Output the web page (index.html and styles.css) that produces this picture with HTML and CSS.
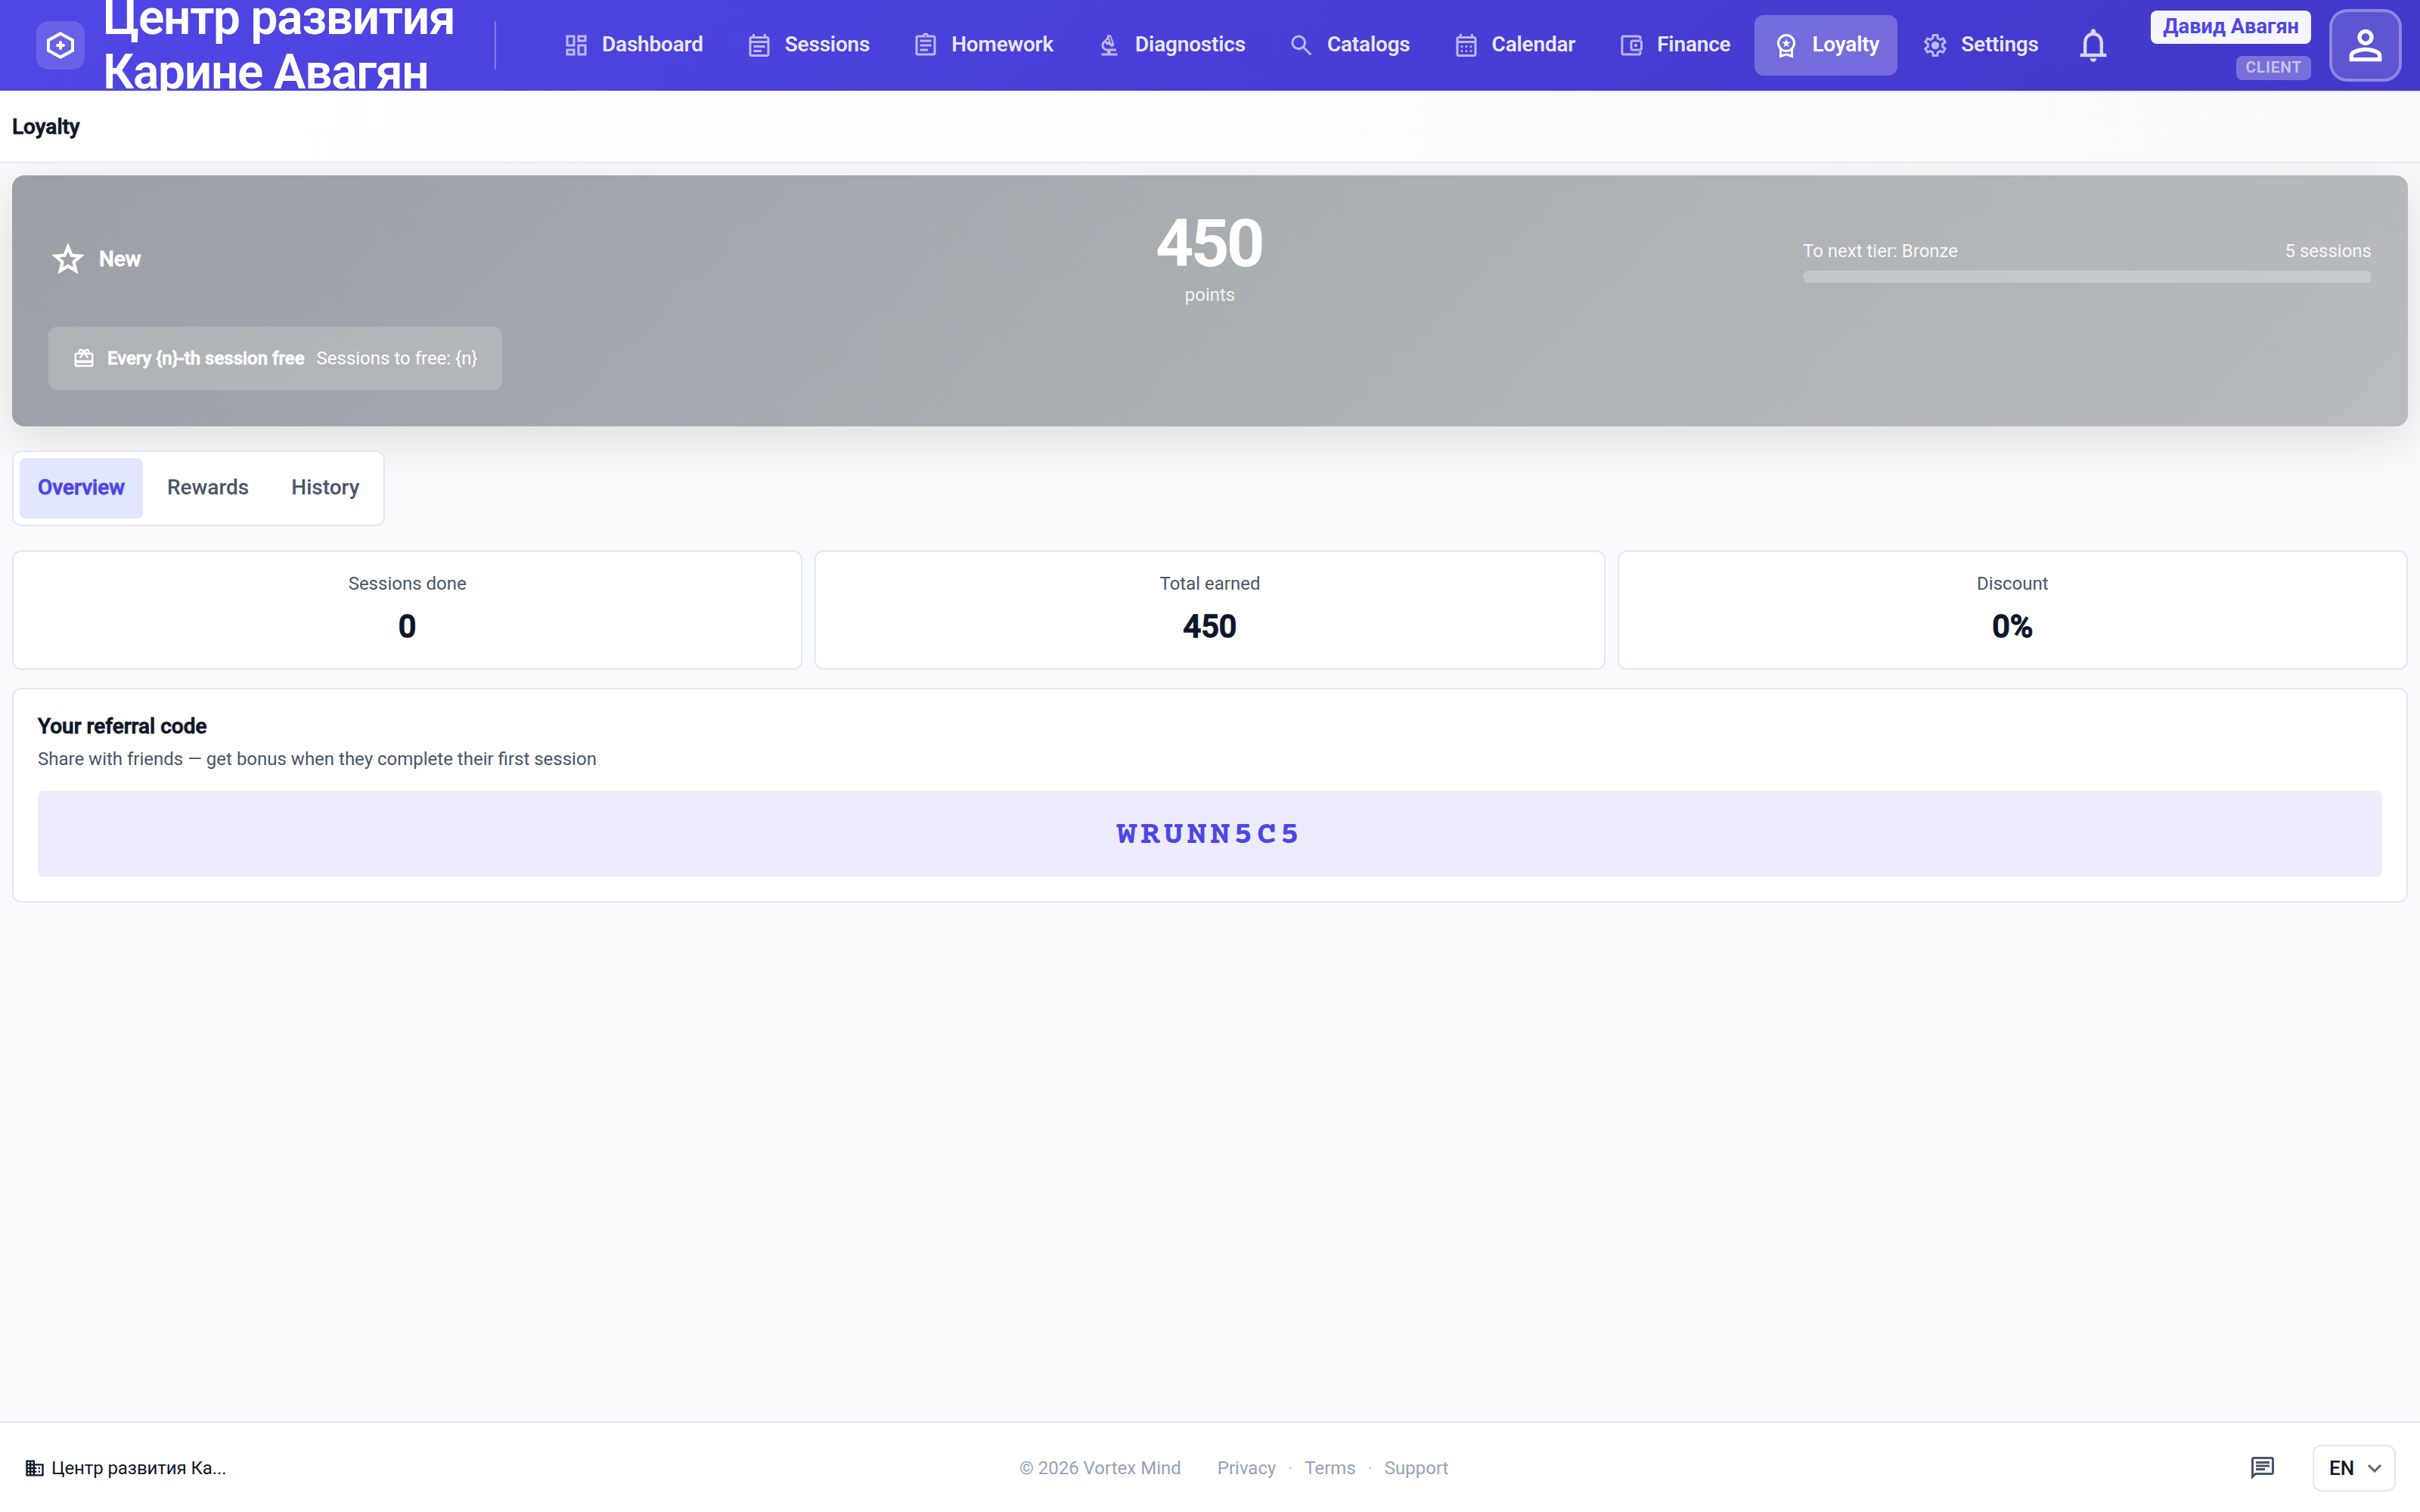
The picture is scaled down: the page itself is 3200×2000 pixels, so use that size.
FILE: index.html
```html
<!DOCTYPE html>
<html lang="en">
<head>
  <meta charset="UTF-8">
  <meta name="viewport" content="width=device-width, initial-scale=1.0">
  <title>Loyalty</title>
  <link rel="stylesheet" href="styles.css">
</head>
<body>
  <header class="topbar">
    <div class="logo">
      <svg viewBox="0 0 64 64"><path d="M32 16.4 48 25.2V38.8L32 47.6 16 38.8V25.2Z"/><path d="M32 28v8M28 32h8"/></svg>
    </div>
    <div class="brand">Центр развития Карине Авагян</div>
    <div class="divider"></div>
    <nav class="nav">
      <a class="nav-item">
        <svg viewBox="0 0 24 24"><path d="M13 9V3h8v6zM3 13V3h8v10zm10 8V11h8v10zM3 21v-6h8v6zm2-10h4V5H5zm10 8h4v-6h-4zm0-12h4V5h-4zM5 19h4v-2H5z"/></svg>
        <span>Dashboard</span>
      </a>
      <a class="nav-item">
        <svg viewBox="0 0 24 24"><path d="M7 14v-2h10v2zm0 4v-2h7v2zm-2 4q-.825 0-1.412-.587T3 20V6q0-.825.588-1.412T5 4h1V2h2v2h8V2h2v2h1q.825 0 1.413.588T21 6v14q0 .825-.587 1.413T19 22zm0-2h14V10H5zM5 8h14V6H5z"/></svg>
        <span>Sessions</span>
      </a>
      <a class="nav-item">
        <svg viewBox="0 0 24 24"><path fill-rule="evenodd" d="M7 17h7v-2H7zm0-4h10v-2H7zm0-4h10V7H7zM5 21q-.825 0-1.412-.587T3 19V5q0-.825.588-1.412T5 3h4.2q.325-.9 1.088-1.45T12 1t1.713.55T14.8 3H19q.825 0 1.413.588T21 5v14q0 .825-.587 1.413T19 21zm0-2h14V5H5zm7-14.75q.325 0 .538-.213t.212-.537t-.213-.537T12 2.75t-.537.213t-.213.537t.213.538t.537.212"/></svg>
        <span>Homework</span>
      </a>
      <a class="nav-item">
        <svg viewBox="0 0 24 24"><path fill-rule="evenodd" d="M5 21v-2h5v-2q-2.075 0-3.537-1.463T5 12q0-1.55.875-2.8T8.1 7.4q.15-.7.65-1.25T9.9 5.4l-.35-1 .95-.35-.35-.95 1.9-.7.35.95.95-.35 3.05 8.45-.95.35.35.95-1.9.7-.35-.95-.95.35-.65-1.75q-.65.4-1.5.4-.65 0-1.2-.325T8.35 9.4Q7.75 9.8 7.4 10.5T7 12q0 1.25.875 2.125T10 15h8v2h-5v2h6v2zm8.6-10.6.95-.35-2.1-5.65-.95.35zM10.5 9q.425 0 .713-.287T11.5 8t-.287-.712T10.5 7t-.712.288T9.5 8t.288.713T10.5 9"/></svg>
        <span>Diagnostics</span>
      </a>
      <a class="nav-item">
        <svg viewBox="0 0 24 24"><path d="m19.6 21-6.3-6.3q-.75.6-1.725.95T9.5 16q-2.725 0-4.612-1.888T3 9.5t1.888-4.612T9.5 3t4.613 1.888T16 9.5q0 1.1-.35 2.075T14.7 13.3l6.3 6.3zM9.5 14q1.875 0 3.188-1.312T14 9.5t-1.312-3.187T9.5 5T6.313 6.313T5 9.5t1.313 3.188T9.5 14"/></svg>
        <span>Catalogs</span>
      </a>
      <a class="nav-item">
        <svg viewBox="0 0 24 24"><path d="M5 22q-.825 0-1.412-.587T3 20V6q0-.825.588-1.412T5 4h1V2h2v2h8V2h2v2h1q.825 0 1.413.588T21 6v14q0 .825-.587 1.413T19 22zm0-2h14V10H5zM5 8h14V6H5z"/><circle cx="8" cy="13" r="1"/><circle cx="12" cy="13" r="1"/><circle cx="16" cy="13" r="1"/><circle cx="8" cy="17" r="1"/><circle cx="12" cy="17" r="1"/><circle cx="16" cy="17" r="1"/></svg>
        <span>Calendar</span>
      </a>
      <a class="nav-item">
        <svg viewBox="0 0 24 24"><path fill-rule="evenodd" d="M5 21q-.825 0-1.412-.587T3 19V5q0-.825.588-1.412T5 3h14q.825 0 1.413.588T21 5v2.5h-2V5H5v14h14v-2.5h2V19q0 .825-.587 1.413T19 21zm8-4q-.825 0-1.412-.587T11 15V9q0-.825.588-1.412T13 7h7q.825 0 1.413.588T22 9v6q0 .825-.587 1.413T20 17zm7-2V9h-7v6z"/><circle cx="16" cy="12" r="1.5"/></svg>
        <span>Finance</span>
      </a>
      <a class="nav-item active">
        <svg viewBox="0 0 24 24"><path d="m9.675 13.7.875-2.85L8.25 9h2.85l.9-2.8.9 2.8h2.85l-2.325 1.85.875 2.85L12 11.95zM6 23v-7.725q-.95-1.05-1.475-2.4T4 10q0-3.35 2.325-5.675T12 2t5.675 2.325T20 10q0 1.525-.525 2.875T18 15.275V23l-6-2zm6-7q2.5 0 4.25-1.75T18 10t-1.75-4.25T12 4 7.75 5.75 6 10t1.75 4.25T12 16m-4 4.025L12 19l4 1.025v-3.1q-.875.5-1.888.788T12 18t-2.113-.288T8 16.925z"/></svg>
        <span>Loyalty</span>
      </a>
      <a class="nav-item">
        <svg viewBox="0 0 24 24"><path fill-rule="evenodd" d="m9.25 22l-.4-3.2q-.325-.125-.612-.3t-.563-.375L4.7 19.375l-2.75-4.75l2.575-1.95Q4.5 12.5 4.5 12.338v-.675q0-.163.025-.338L1.95 9.375l2.75-4.75l2.975 1.25q.275-.2.575-.375t.6-.3l.4-3.2h5.5l.4 3.2q.325.125.613.3t.562.375l2.975-1.25l2.75 4.75l-2.575 1.95q.025.175.025.338v.674q0 .163-.05.338l2.575 1.95l-2.75 4.75l-2.95-1.25q-.275.2-.575.375t-.6.3l-.4 3.2zM11 20h1.975l.35-2.65q.775-.2 1.438-.587t1.212-.938l2.475 1.025l.975-1.7l-2.15-1.625q.125-.35.175-.737T17.5 12t-.05-.787t-.175-.738l2.15-1.625l-.975-1.7l-2.475 1.05q-.55-.575-1.212-.962t-1.438-.588L13 4h-1.975l-.35 2.65q-.775.2-1.437.588t-1.213.937L5.55 7.15l-.975 1.7l2.15 1.6q-.125.375-.175.75t-.05.8q0 .4.05.775t.175.75l-2.15 1.625l.975 1.7l2.475-1.05q.55.575 1.213.963t1.437.587z"/><circle cx="12" cy="12" r="3.5"/></svg>
        <span>Settings</span>
      </a>
    </nav>
    <svg class="bell" viewBox="0 0 24 24"><path d="M4 19v-2h2v-7q0-2.075 1.25-3.687T10.5 4.2v-.7q0-.625.438-1.062T12 2t1.063.438T13.5 3.5v.7q2 .5 3.25 2.113T18 10v7h2v2zm8 3q-.825 0-1.412-.587T10 20h4q0 .825-.587 1.413T12 22m-4-5h8v-7q0-1.65-1.175-2.825T12 6T9.175 7.175T8 10z"/></svg>
    <div class="user">
      <div class="user-name">Давид Авагян</div>
      <div class="user-role">CLIENT</div>
    </div>
    <div class="avatar">
      <svg viewBox="0 0 24 24"><path d="M12 12q-1.65 0-2.825-1.175T8 8t1.175-2.825T12 4t2.825 1.175T16 8t-1.175 2.825T12 12m-8 8v-2.8q0-.85.438-1.562T5.6 14.55q1.55-.775 3.15-1.162T12 13t3.25.388t3.15 1.162q.725.375 1.163 1.088T20 17.2V20zm2-2h12v-.8q0-.275-.137-.5t-.363-.35q-1.35-.675-2.725-1.012T12 15t-2.775.338T6.5 16.35q-.225.125-.363.35T6 17.2zm6-8q.825 0 1.413-.587T14 8t-.587-1.412T12 6t-1.412.588T10 8t.588 1.413T12 10"/></svg>
    </div>
  </header>

  <div class="page-head">
    <h1>Loyalty</h1>
  </div>

  <main class="content">
    <section class="hero">
      <div class="hero-row">
        <div class="tier">
          <svg viewBox="0 0 24 24"><path d="m8.85 16.825l3.15-1.9l3.15 1.925l-.825-3.6l2.775-2.4l-3.65-.325l-1.45-3.4l-1.45 3.375l-3.65.325l2.775 2.425zM5.825 21l1.625-7.025L2 9.25l7.2-.625L12 2l2.8 6.625l7.2.625l-5.45 4.725L18.175 21L12 17.275z"/></svg>
          <span>New</span>
        </div>
        <div class="points">
          <div class="points-value">450</div>
          <div class="points-label">points</div>
        </div>
        <div class="progress">
          <div class="progress-text"><span>To next tier: Bronze</span><span>5 sessions</span></div>
          <div class="progress-track"></div>
        </div>
      </div>
      <div class="promo">
        <svg viewBox="0 0 24 24"><path d="M20 6h-2.18c.11-.31.18-.65.18-1 0-1.66-1.34-3-3-3-1.05 0-1.96.54-2.5 1.35l-.5.67-.5-.68C10.96 2.54 10.05 2 9 2 7.34 2 6 3.34 6 5c0 .35.07.69.18 1H4c-1.11 0-1.99.89-1.99 2L2 19c0 1.11.89 2 2 2h16c1.11 0 2-.89 2-2V8c0-1.11-.89-2-2-2zm-5-2c.55 0 1 .45 1 1s-.45 1-1 1-1-.45-1-1 .45-1 1-1zM9 4c.55 0 1 .45 1 1s-.45 1-1 1-1-.45-1-1 .45-1 1-1zm11 15H4v-2h16v2zm0-5H4V8h5.08L7 10.83 8.62 12 11 8.76l1-1.36 1 1.36L15.38 12 17 10.83 14.92 8H20v6z"/></svg>
        <strong>Every {n}-th session free</strong>
        <span>Sessions to free: {n}</span>
      </div>
    </section>

    <div class="tabs">
      <button class="tab active">Overview</button>
      <button class="tab">Rewards</button>
      <button class="tab">History</button>
    </div>

    <section class="stats">
      <div class="card stat">
        <div class="stat-label">Sessions done</div>
        <div class="stat-value">0</div>
      </div>
      <div class="card stat">
        <div class="stat-label">Total earned</div>
        <div class="stat-value">450</div>
      </div>
      <div class="card stat">
        <div class="stat-label">Discount</div>
        <div class="stat-value">0%</div>
      </div>
    </section>

    <section class="card referral">
      <h2>Your referral code</h2>
      <p>Share with friends — get bonus when they complete their first session</p>
      <div class="code">WRUNN5C5</div>
    </section>
  </main>

  <footer class="footer">
    <div class="org">
      <svg viewBox="0 0 24 24"><path d="M12 7V3H2v18h20V7H12zM6 19H4v-2h2v2zm0-4H4v-2h2v2zm0-4H4V9h2v2zm0-4H4V5h2v2zm4 12H8v-2h2v2zm0-4H8v-2h2v2zm0-4H8V9h2v2zm0-4H8V5h2v2zm10 12h-8v-2h2v-2h-2v-2h2v-2h-2V9h8v10zm-2-8h-2v2h2v-2zm0 4h-2v2h2v-2z"/></svg>
      <span>Центр развития Ка...</span>
    </div>
    <div class="links">
      <span class="copy">© 2026 Vortex Mind</span>
      <a>Privacy</a><i>·</i><a>Terms</a><i>·</i><a>Support</a>
    </div>
    <div class="footer-tools">
      <svg class="chat" viewBox="0 0 24 24"><path d="M6 14h8v-2H6zm0-3h12V9H6zm0-3h12V6H6zM2 22V4q0-.825.588-1.412T4 2h16q.825 0 1.413.588T22 4v12q0 .825-.587 1.413T20 18H6zm3.15-6H20V4H4v13.125z"/></svg>
      <div class="lang">
        <span>EN</span>
        <svg viewBox="0 0 20 12"><path d="m2 2 8 8 8-8"/></svg>
      </div>
    </div>
  </footer>
</body>
</html>
```
FILE: styles.css
```css
* {
  box-sizing: border-box;
}
body {
  margin: 0;
  height: 2000px;
  display: flex;
  flex-direction: column;
  font-family: Roboto, "Noto Sans", sans-serif;
  font-size: 28px;
  color: #0f172a;
  background: #f8fafc;
}
h1, h2, p {
  margin: 0;
}
svg {
  display: block;
  flex: none;
  fill: currentColor;
}

/* medium weight thickened by an outline, keeps the narrow letter widths */
.page-head h1, .tier, .promo strong, .tab.active, .stat-value, .referral h2 {
  font-weight: 500;
  -webkit-text-stroke: 0.032em currentColor;
}

/* top bar */
.topbar {
  height: 120px;
  flex: none;
  display: flex;
  align-items: center;
  padding: 0 24px 0 48px;
  overflow: hidden;
  color: #fff;
  background: linear-gradient(135deg, #4f46e5, #4338ca);
}
.logo {
  width: 64px;
  height: 64px;
  flex: none;
  border-radius: 16px;
  background: rgba(255, 255, 255, 0.15);
}
.logo svg {
  fill: none;
  stroke: #fff;
  stroke-width: 4;
  stroke-linecap: round;
}
.brand {
  width: 520px;
  flex: none;
  margin-left: 24px;
  font-size: 64px;
  font-weight: 600;
  line-height: 72px;
  letter-spacing: -1.28px;
}
.divider {
  width: 2px;
  height: 64px;
  flex: none;
  margin-left: -2px;
  background: rgba(255, 255, 255, 0.3);
}
.nav {
  display: flex;
  gap: 8px;
  margin-left: 64px;
}
.nav-item {
  height: 80px;
  display: flex;
  align-items: center;
  gap: 16px;
  padding: 0 24px;
  border-radius: 12px;
  font-weight: 600;
  letter-spacing: -0.2px;
  color: rgba(255, 255, 255, 0.9);
}
.nav-item span {
  padding-bottom: 3px;
}
.nav-item svg {
  width: 36px;
  height: 36px;
  opacity: 0.7;
}
.nav-item.active {
  color: #fff;
  background: rgba(255, 255, 255, 0.25);
}
.nav-item.active svg {
  opacity: 1;
}
.bell {
  width: 52px;
  height: 52px;
  margin-left: auto;
  margin-right: 50px;
  opacity: 0.8;
}
.user {
  display: flex;
  flex-direction: column;
  align-items: flex-end;
  gap: 16px;
}
.user-name {
  height: 44px;
  padding: 0 16px;
  border-radius: 8px;
  font-size: 27.2px;
  font-weight: 700;
  line-height: 42px;
  color: #4f46e5;
  background: rgba(255, 255, 255, 0.95);
}
.user-role {
  height: 32px;
  padding: 0 12px;
  border-radius: 8px;
  font-size: 20.8px;
  font-weight: 600;
  line-height: 31px;
  letter-spacing: 0.8px;
  color: rgba(255, 255, 255, 0.6);
  background: rgba(255, 255, 255, 0.28);
}
.avatar {
  width: 96px;
  height: 96px;
  flex: none;
  display: flex;
  align-items: center;
  justify-content: center;
  margin-left: 24px;
  border: 4px solid rgba(255, 255, 255, 0.4);
  border-radius: 24px;
  background: rgba(255, 255, 255, 0.15);
  background-clip: padding-box;
}
.avatar svg {
  width: 64px;
  height: 64px;
}

/* page title strip */
.page-head {
  position: relative;
  z-index: 1;
  height: 96px;
  flex: none;
  display: flex;
  align-items: center;
  padding: 0 16px;
  border-bottom: 2px solid #e2e8f0;
  background: linear-gradient(90deg, rgba(226, 232, 240, 0) 20%, #e2e8f0) top / 100% 2px no-repeat,
    linear-gradient(90deg, #fff, #f8fafc);
}
.page-head h1 {
  font-size: 28px;
}

/* content */
.content {
  flex: 1;
  padding: 16px;
}
.hero {
  height: 332px;
  padding: 48px;
  border-radius: 16px;
  color: #fff;
  background: linear-gradient(135deg, #9aa0a6, #b8bcc0);
  box-shadow: 0 16px 64px rgba(0, 0, 0, 0.12);
}
.hero-row {
  height: 128px;
  display: grid;
  grid-template-columns: 752px 1fr 752px;
  align-items: center;
  margin-bottom: 24px;
}
.tier {
  display: flex;
  align-items: center;
  gap: 15px;
  padding-bottom: 3px;
}
.tier svg {
  width: 52px;
  height: 52px;
}
.points {
  text-align: center;
}
.points-value {
  padding-right: 3px;
  font-size: 88px;
  font-weight: 700;
  line-height: 84px;
  letter-spacing: -3.5px;
}
.points-label {
  margin-top: 8px;
  font-size: 24px;
  line-height: 36px;
  opacity: 0.85;
}
.progress-text {
  display: flex;
  justify-content: space-between;
  font-size: 24px;
  line-height: 36px;
  opacity: 0.9;
}
.progress-track {
  height: 16px;
  margin-top: 8px;
  border-radius: 8px;
  background: rgba(255, 255, 255, 0.25);
}
.promo {
  width: 600px;
  height: 84px;
  display: flex;
  align-items: center;
  padding: 0 32px;
  border-radius: 12px;
  font-size: 24px;
  white-space: nowrap;
  background: rgba(255, 255, 255, 0.18);
}
.promo svg {
  width: 30px;
  height: 30px;
  margin-right: 16px;
}
.promo strong {
  margin-right: 16px;
}

/* tabs */
.tabs {
  width: fit-content;
  display: flex;
  gap: 8px;
  margin-top: 32px;
  padding: 8px;
  border: 2px solid #e2e8f0;
  border-radius: 12px;
  background: #fff;
}
.tab {
  height: 80px;
  padding: 0 24px 4px;
  border: none;
  border-radius: 8px;
  font-family: inherit;
  font-size: 28px;
  font-weight: 500;
  color: #475569;
  background: none;
}
.tab.active {
  color: #4f46e5;
  background: #e0e7ff;
}

/* cards */
.card {
  border: 2px solid #e2e8f0;
  border-radius: 12px;
  background: #fff;
}
.stats {
  display: grid;
  grid-template-columns: repeat(3, 1fr);
  gap: 16px;
  margin-top: 32px;
}
.stat {
  padding: 24px;
  text-align: center;
}
.stat-label {
  font-size: 24px;
  line-height: 36px;
  color: #475569;
}
.stat-value {
  margin-top: 8px;
  font-size: 41.6px;
  line-height: 62px;
}
.referral {
  margin-top: 24px;
  padding: 32px;
}
.referral h2 {
  font-size: 28px;
  line-height: 34px;
}
.referral p {
  margin-top: 8px;
  font-size: 24px;
  line-height: 36px;
  color: #475569;
}
.code {
  margin-top: 24px;
  padding: 27px 24px 21px;
  border-radius: 8px;
  font-family: "Courier Prime", "Courier 10 Pitch", "Nimbus Mono PS", Courier, "Liberation Mono", monospace;
  font-size: 44px;
  font-weight: 700;
  line-height: 66px;
  letter-spacing: 4.4px;
  text-align: center;
  color: #4f46e5;
  background: #edecfc;
}

/* footer */
.footer {
  height: 120px;
  flex: none;
  display: flex;
  align-items: center;
  justify-content: space-between;
  padding: 1px 32px 0;
  border-top: 2px solid #e2e8f0;
  font-size: 24px;
  background: #fff;
}
.org {
  display: flex;
  align-items: center;
  gap: 8px;
  letter-spacing: -0.1px;
}
.org svg {
  width: 28px;
  height: 28px;
}
.links {
  display: flex;
  padding-right: 10px;
  color: #94a3b8;
}
.links i {
  width: 38px;
  font-style: normal;
  text-align: center;
  opacity: 0.6;
}
.copy {
  margin-right: 48px;
}
.footer-tools {
  width: 194px;
  display: flex;
  align-items: center;
  justify-content: space-between;
}
.chat {
  width: 36px;
  height: 36px;
  color: #475569;
}
.lang {
  width: 110px;
  height: 62px;
  display: flex;
  align-items: center;
  justify-content: space-between;
  padding: 0 16px 0 20px;
  border: 2px solid #e2e8f0;
  border-radius: 12px;
  font-size: 26px;
  font-weight: 500;
}
.lang svg {
  width: 20px;
  height: 12px;
  fill: none;
  stroke: #666;
  stroke-width: 3;
}
```
